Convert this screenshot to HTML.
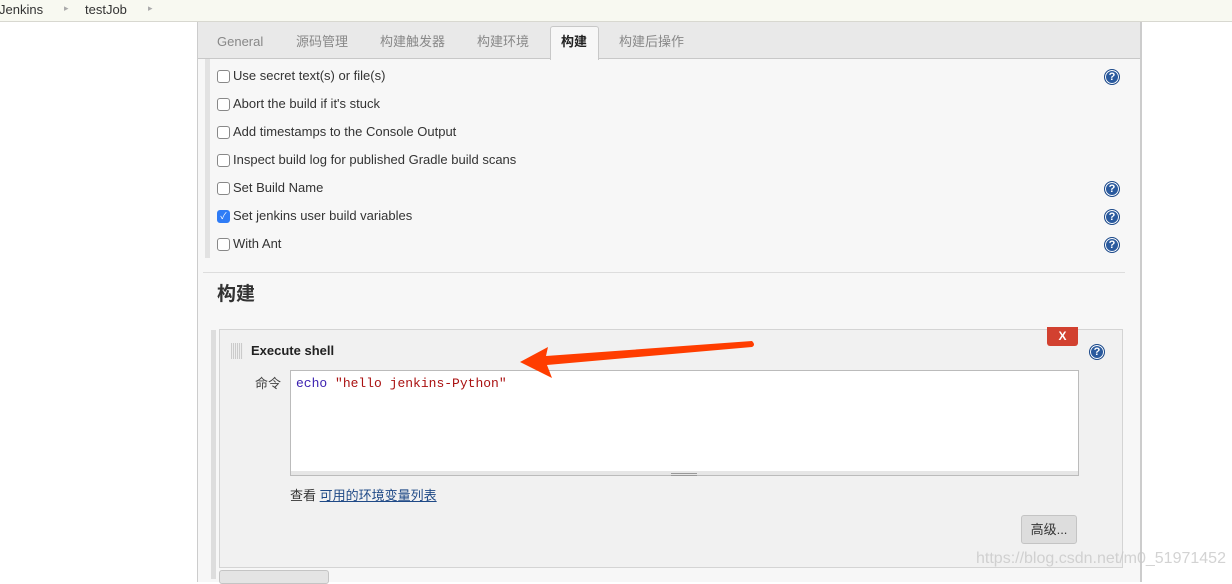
<!DOCTYPE html>
<html><head><meta charset="utf-8"><style>
body{margin:0;width:1232px;height:579px;overflow:hidden;background:#fff;font-family:"Liberation Sans","Noto Sans CJK SC",sans-serif;font-size:13px;color:#333;position:relative}
.a{position:absolute}
.cb{position:absolute;left:217px;width:11px;height:11px;border:1px solid #888;border-radius:3px;background:#fff}
.lb{position:absolute;left:233px;font-size:13px;color:#333}
.help{position:absolute;width:14px;height:14px;border-radius:50%;background:#2a5a9e;border:1px solid #1d4a8a;box-shadow:inset 0 0 0 1px #fff;color:#fff;font:bold 11px "Liberation Sans",sans-serif;text-align:center;line-height:14px}
.tab{position:absolute;top:31px;font-size:13px;color:#888}
</style></head><body>
<div class="a" style="left:0;top:0;width:1232px;height:21px;background:#f8f9f1;border-bottom:1px solid #d8d8d0"></div>
<div class="a" style="left:-1px;top:2px;font-size:13px;color:#333">Jenkins</div>
<div class="a" style="left:64px;top:3px;font-size:9px;color:#aaa">▸</div>
<div class="a" style="left:85px;top:2px;font-size:13px;color:#333">testJob</div>
<div class="a" style="left:148px;top:3px;font-size:9px;color:#aaa">▸</div>
<div class="a" style="left:197px;top:22px;width:942px;height:560px;background:#f7f7f7;border-left:1px solid #ccc;border-right:2px solid #ccc"></div>
<div class="a" style="left:198px;top:22px;width:942px;height:36px;background:#e9e9e9;border-bottom:1px solid #c8c8c8"></div>
<div class="tab" style="left:217px;top:34px">General</div>
<div class="tab" style="left:296px">源码管理</div>
<div class="tab" style="left:380px">构建触发器</div>
<div class="tab" style="left:477px">构建环境</div>
<div class="a" style="left:550px;top:26px;width:47px;height:33px;background:#f7f7f7;border:1px solid #c8c8c8;border-bottom:none;border-radius:3px 3px 0 0"></div>
<div class="tab" style="left:561px;color:#222;font-weight:bold">构建</div>
<div class="tab" style="left:619px">构建后操作</div>
<div class="a" style="left:205px;top:59px;width:5px;height:199px;background:#e2e2e2"></div>
<div class="cb" style="top:70px"></div><div class="lb" style="top:68px">Use secret text(s) or file(s)</div>
<div class="cb" style="top:98px"></div><div class="lb" style="top:96px">Abort the build if it's stuck</div>
<div class="cb" style="top:126px"></div><div class="lb" style="top:124px">Add timestamps to the Console Output</div>
<div class="cb" style="top:154px"></div><div class="lb" style="top:152px">Inspect build log for published Gradle build scans</div>
<div class="cb" style="top:182px"></div><div class="lb" style="top:180px">Set Build Name</div>
<div class="cb" style="top:210px;background:#2f7cf6;border-color:#2f7cf6;color:#fff;font-size:9px;line-height:11px;text-align:center">✓</div><div class="lb" style="top:208px">Set jenkins user build variables</div>
<div class="cb" style="top:238px"></div><div class="lb" style="top:236px">With Ant</div>
<div class="help" style="left:1104px;top:69px">?</div>
<div class="help" style="left:1104px;top:181px">?</div>
<div class="help" style="left:1104px;top:209px">?</div>
<div class="help" style="left:1104px;top:237px">?</div>
<div class="a" style="left:203px;top:272px;width:922px;height:1px;background:#ddd"></div>
<div class="a" style="left:217px;top:279px;font-size:19px;font-weight:bold;color:#333">构建</div>
<div class="a" style="left:211px;top:330px;width:5px;height:249px;background:#ddd"></div>
<div class="a" style="left:219px;top:329px;width:902px;height:237px;background:#f1f1f1;border:1px solid #d4d4d4"></div>
<div class="a" style="left:231px;top:343px;width:12px;height:16px;background:repeating-linear-gradient(90deg,#bbb 0 1px,transparent 1px 2px),#eee;opacity:.7"></div>
<div class="a" style="left:251px;top:343px;font-size:13px;font-weight:bold;color:#222">Execute shell</div>
<div class="a" style="left:1047px;top:327px;width:31px;height:19px;background:#d24130;border-radius:0 0 3px 3px;color:#fff;font-weight:bold;font-size:12px;text-align:center;line-height:19px">X</div>
<div class="help" style="left:1089px;top:344px">?</div>
<div class="a" style="left:255px;top:373px;font-size:13px;color:#444">命令</div>
<div class="a" style="left:290px;top:370px;width:787px;height:100px;background:#fff;border:1px solid #bbb"></div>
<div class="a" style="left:290px;top:471px;width:787px;height:4px;background:#e6e6e6;border:1px solid #bbb;border-top:none"></div>
<div class="a" style="left:671px;top:473px;width:26px;height:2px;border-top:1px solid #999;border-bottom:1px solid #999;height:1px"></div>
<div class="a" style="left:296px;top:376px;font:13px 'Liberation Mono',monospace"><span style="color:#3a1fb0">echo</span> <span style="color:#a11">"hello jenkins-Python"</span></div>
<div class="a" style="left:290px;top:485px;font-size:13px;color:#333">查看 <span style="color:#204a87;text-decoration:underline">可用的环境变量列表</span></div>
<div class="a" style="left:1021px;top:515px;width:54px;height:27px;background:#ddd;border:1px solid #c4c4c4;border-radius:3px;text-align:center;line-height:27px;font-size:13px;color:#333">高级...</div>
<div class="a" style="left:219px;top:570px;width:108px;height:12px;background:#e4e4e4;border:1px solid #c4c4c4;border-radius:3px"></div>
<div class="a" style="left:976px;top:550px;font-size:16px;color:rgba(200,200,200,.8)">https://blog.csdn.net/m0_51971452</div>
<svg class="a" style="left:0;top:0" width="1232" height="579"><path d="M520 362 L548 347 L546 356 L752 341 Q756 345 752 347 L547 365 L552 378 Z" fill="#ff3d00"/></svg>
</body></html>
